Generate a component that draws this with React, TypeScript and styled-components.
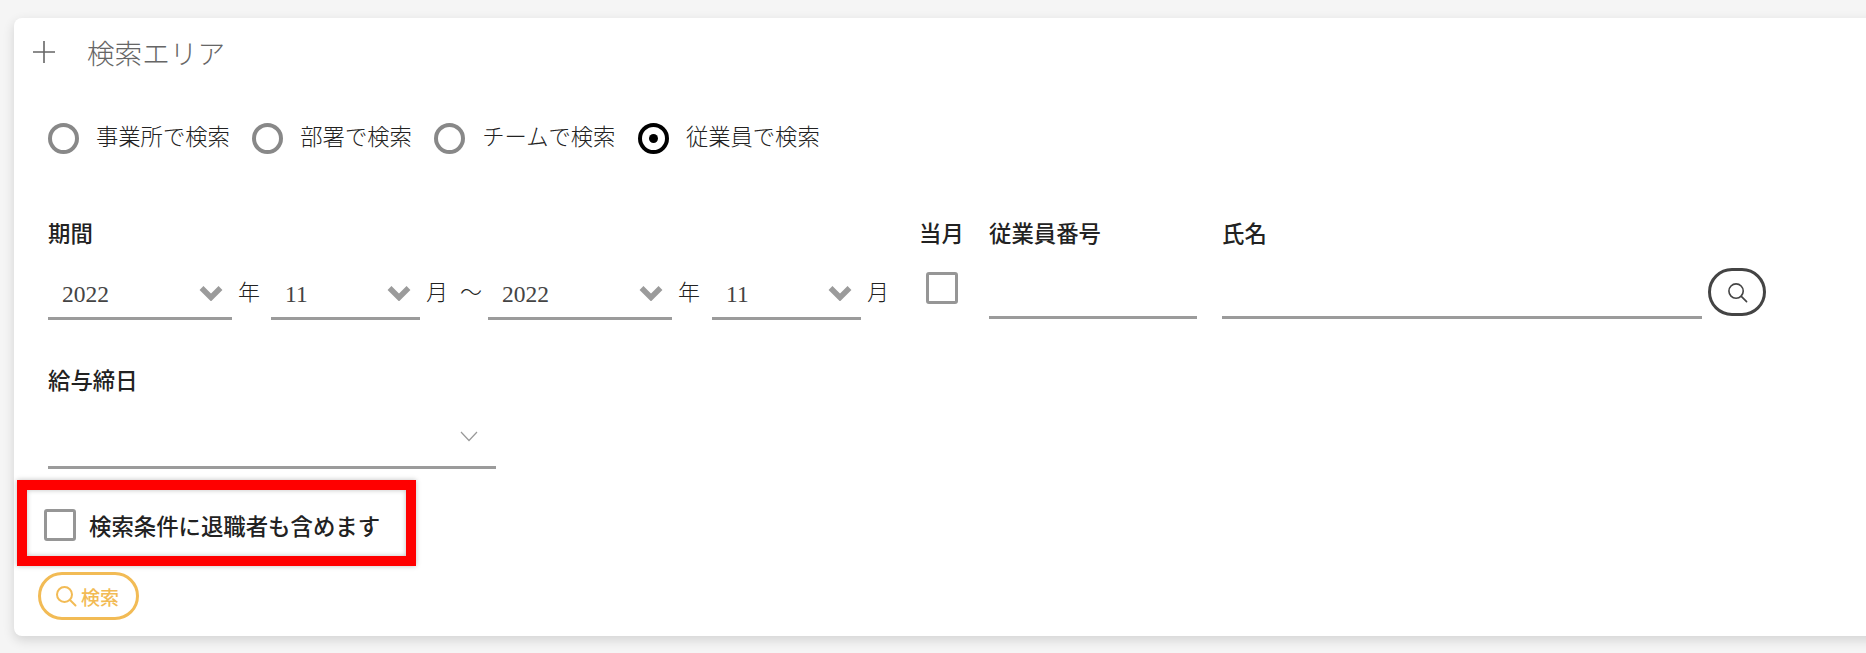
import React, { FC } from 'react';
import styled, { createGlobalStyle } from 'styled-components';

const SERIF = `'Liberation Serif', 'Noto Sans CJK JP', serif`;

const GlobalStyle = createGlobalStyle`
  html, body {
    margin: 0;
    padding: 0;
    height: 653px;
    overflow: hidden;
    background: #f5f5f5;
  }
  * {
    box-sizing: border-box;
  }
`;

const Card = styled.section`
  width: 1880px;
  height: 618px;
  margin: 18px 0 0 14px;
  padding: 0 0 0 34px;
  background: #fff;
  border-radius: 8px;
  box-shadow: 0 4px 12px rgba(0, 0, 0, 0.14);
  font-family: ${SERIF};
  color: #222;
`;

const Header = styled.header`
  display: flex;
  align-items: center;
  height: 68px;
  margin-left: -15px;
  color: #666;
  font-size: 27.6px;
  font-weight: 300;
`;

const PlusIcon = styled.svg`
  width: 22px;
  height: 22px;
  margin-right: 32px;
`;

const RadioRow = styled.div`
  display: flex;
  align-items: center;
  height: 32px;
  margin-top: 36px;
`;

const RadioItem = styled.label`
  display: flex;
  align-items: center;
  font-size: 22.3px;
  font-weight: 300;
  line-height: 32px;
  margin-right: 22.5px;
`;

const RadioCircle = styled.span<{ $checked?: boolean }>`
  position: relative;
  width: 31px;
  height: 31px;
  margin-right: 17px;
  border-radius: 50%;
  border: 4px solid ${(p) => (p.$checked ? '#000' : '#888')};

  &::after {
    content: '';
    display: ${(p) => (p.$checked ? 'block' : 'none')};
    position: absolute;
    left: 7px;
    top: 7px;
    width: 9px;
    height: 9px;
    border-radius: 50%;
    background: #000;
  }
`;

const FieldRow = styled.div`
  display: flex;
  align-items: flex-start;
  margin-top: 65px;
  height: 132px;
`;

const Field = styled.div<{ $width?: number; $gap?: number }>`
  width: ${(p) => (p.$width ? `${p.$width}px` : 'auto')};
  margin-right: ${(p) => p.$gap ?? 0}px;
`;

const FieldLabel = styled.div`
  font-size: 22.4px;
  font-weight: 500;
  line-height: 32px;
  height: 32px;
  color: #222;
  white-space: nowrap;
`;

const Controls = styled.div`
  display: flex;
  align-items: flex-end;
  height: 54px;
  margin-top: 15px;
`;

const SelectBox = styled.div<{ $width: number }>`
  display: flex;
  align-items: center;
  justify-content: space-between;
  flex: none;
  width: ${(p) => p.$width}px;
  height: 54px;
  padding: 6px 9px 0 14px;
  border-bottom: 3px solid #9b9b9b;
  font-size: 23.5px;
  font-weight: 300;
  color: #444;
`;

const Unit = styled.span<{ $width: number }>`
  flex: none;
  width: ${(p) => p.$width}px;
  height: 54px;
  padding-left: 6px;
  line-height: 54px;
  font-size: 22px;
  font-weight: 300;
  text-align: left;
`;

const BoldChevron = styled.svg`
  width: 24px;
  height: 16px;
  margin-bottom: 3px;
`;

const CheckBox = styled.span`
  display: block;
  flex: none;
  width: 32px;
  height: 32px;
  background: #fff;
  border: 3px solid #969696;
  border-radius: 3px;
`;

const CheckCell = styled.div`
  display: flex;
  justify-content: center;
  margin-top: 21px;
`;

const TextLine = styled.div`
  height: 54px;
  margin-top: 14px;
  border-bottom: 3px solid #9b9b9b;
`;

const RoundSearch = styled.button`
  display: flex;
  align-items: center;
  justify-content: center;
  width: 58px;
  height: 48px;
  margin-top: 49px;
  padding: 0;
  background: #fff;
  border: 3px solid #444;
  border-radius: 24px;
`;

const ClosingField = styled.div`
  width: 448px;
  margin-top: 15px;
`;

const ThinSelect = styled.div`
  display: flex;
  align-items: center;
  justify-content: flex-end;
  height: 54px;
  margin-top: 17px;
  padding: 0 18px 8px 0;
  border-bottom: 3px solid #9b9b9b;
`;

const ThinChevron = styled.svg`
  width: 18px;
  height: 11px;
`;

const HighlightBox = styled.div`
  display: flex;
  align-items: center;
  width: 399px;
  height: 86px;
  margin: 11px 0 0 -31px;
  padding: 3px 0 0 17px;
  border: 10px solid #f00;
  box-shadow: 0 0 5px rgba(0, 0, 0, 0.25), inset 0 0 5px rgba(0, 0, 0, 0.25);
  background: #fff;
`;

const RetiredLabel = styled.span`
  margin-left: 13px;
  font-family: ${SERIF};
  font-size: 22.4px;
  font-weight: 500;
  color: #222;
  white-space: nowrap;
`;

const SearchButton = styled.button`
  display: flex;
  align-items: center;
  width: 101px;
  height: 48px;
  margin: 6px 0 0 -10px;
  padding: 0 0 0 14px;
  background: #fff;
  border: 3px solid #f2bb55;
  border-radius: 24px;
  color: #f2bb55;
  font-family: ${SERIF};
  font-size: 19px;
  font-weight: 500;
`;

const SearchGlyph = styled.svg<{ $size: number; $gap: number }>`
  width: ${(p) => p.$size}px;
  height: ${(p) => p.$size}px;
  margin-right: ${(p) => p.$gap}px;
`;

const Magnifier: FC<{ size: number; gap: number; color: string; weight: number }> = ({ size, gap, color, weight }) => (
  <SearchGlyph viewBox="0 0 22 22" $size={size} $gap={gap}>
    <circle cx="9.5" cy="9.5" r="7.5" fill="none" stroke={color} strokeWidth={weight} />
    <line x1="15" y1="15" x2="20.5" y2="20.5" stroke={color} strokeWidth={weight} strokeLinecap="round" />
  </SearchGlyph>
);

const Chevron: FC = () => (
  <BoldChevron viewBox="0 0 24 16">
    <polyline points="2.5,3 12,12.5 21.5,3" fill="none" stroke="#9b9b9b" strokeWidth="5.5" />
  </BoldChevron>
);

const radios = [
  { label: '事業所で検索' },
  { label: '部署で検索' },
  { label: 'チームで検索' },
  { label: '従業員で検索', checked: true },
];

const App: FC = () => (
  <>
    <GlobalStyle />
    <Card>
      <Header>
        <PlusIcon viewBox="0 0 22 22">
          <path d="M0 11h22M11 0v22" stroke="#666" strokeWidth="1.6" fill="none" />
        </PlusIcon>
        検索エリア
      </Header>

      <RadioRow>
        {radios.map((r) => (
          <RadioItem key={r.label}>
            <RadioCircle $checked={r.checked} />
            {r.label}
          </RadioItem>
        ))}
      </RadioRow>

      <FieldRow>
        <Field $width={871}>
          <FieldLabel>期間</FieldLabel>
          <Controls>
            <SelectBox $width={184}>
              2022
              <Chevron />
            </SelectBox>
            <Unit $width={39}>年</Unit>
            <SelectBox $width={149}>
              11
              <Chevron />
            </SelectBox>
            <Unit $width={34}>月</Unit>
            <Unit $width={34}>〜</Unit>
            <SelectBox $width={184}>
              2022
              <Chevron />
            </SelectBox>
            <Unit $width={40}>年</Unit>
            <SelectBox $width={149}>
              11
              <Chevron />
            </SelectBox>
            <Unit $width={30}>月</Unit>
          </Controls>
        </Field>
        <Field $width={46} $gap={24}>
          <FieldLabel>当月</FieldLabel>
          <CheckCell>
            <CheckBox />
          </CheckCell>
        </Field>
        <Field $width={208} $gap={25}>
          <FieldLabel>従業員番号</FieldLabel>
          <TextLine />
        </Field>
        <Field $width={480} $gap={6}>
          <FieldLabel>氏名</FieldLabel>
          <TextLine />
        </Field>
        <RoundSearch aria-label="検索">
          <Magnifier size={21} gap={0} color="#444" weight={1.7} />
        </RoundSearch>
      </FieldRow>

      <ClosingField>
        <FieldLabel>給与締日</FieldLabel>
        <ThinSelect>
          <ThinChevron viewBox="0 0 18 11">
            <polyline points="1,1 9,9.5 17,1" fill="none" stroke="#999" strokeWidth="1.2" />
          </ThinChevron>
        </ThinSelect>
      </ClosingField>

      <HighlightBox>
        <CheckBox />
        <RetiredLabel>検索条件に退職者も含めます</RetiredLabel>
      </HighlightBox>

      <SearchButton>
        <Magnifier size={22} gap={4} color="#f2bb55" weight={2} />
        検索
      </SearchButton>
    </Card>
  </>
);

export default App;
